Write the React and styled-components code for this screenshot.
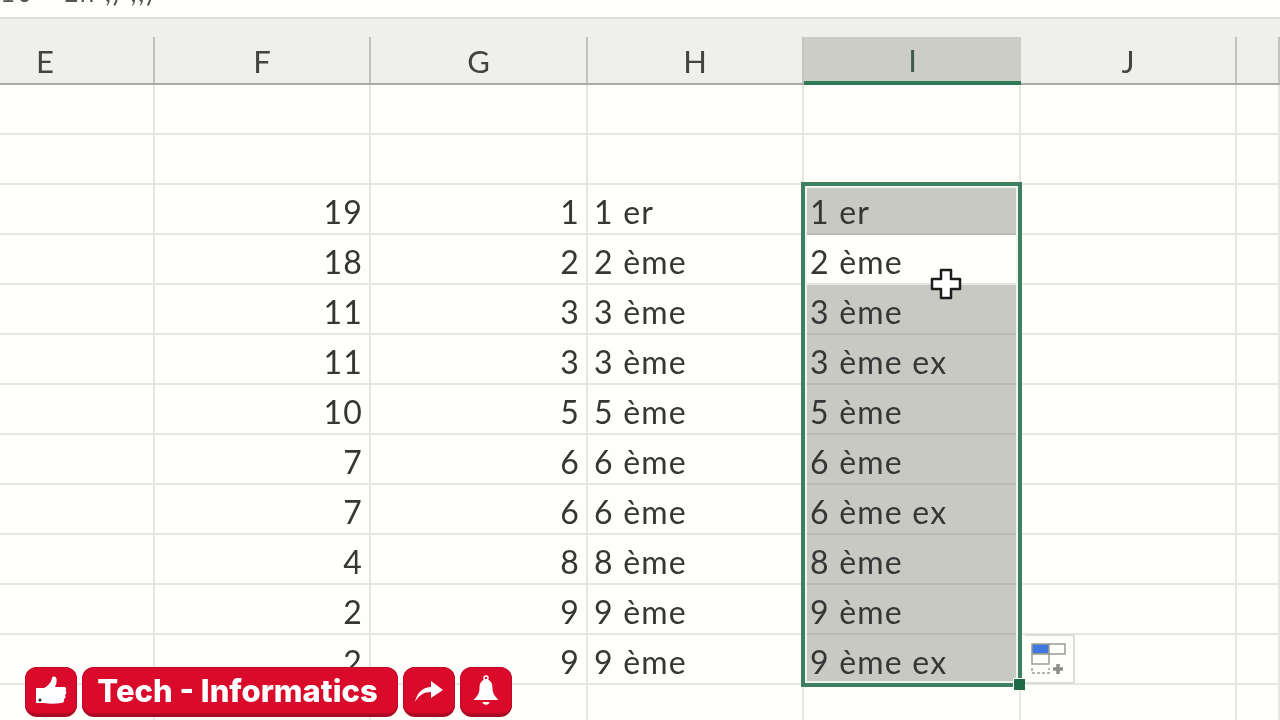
import React from 'react';
import styled, { createGlobalStyle } from 'styled-components';

const GlobalStyle = createGlobalStyle`
  html, body {
    margin: 0;
    padding: 0;
    background: #fefefa;
  }
  body {
    font-family: "Lato", "Liberation Sans", sans-serif;
  }
`;

const COLUMNS = '155px 216px 217px 216px 217px 216px 43px';

const Page = styled.div`
  position: relative;
  width: 1280px;
  height: 720px;
  overflow: hidden;
  background: #fefefa;
  color: #363636;
  filter: blur(0.35px);
`;

const FormulaBar = styled.div`
  height: 17px;
  overflow: hidden;
  border-bottom: 2px solid #dcdcd8;
  font-size: 26px;
  line-height: 30px;
  color: #55554f;
  white-space: nowrap;
`;

const FormulaText = styled.div`
  margin-top: -23px;
  letter-spacing: 2px;
`;

const HeaderRow = styled.div`
  display: grid;
  grid-template-columns: ${COLUMNS};
  height: 64px;
  align-items: end;
  background: #efefec;
  border-bottom: 2px solid #a9a9a5;
`;

const HeadCell = styled.div`
  box-sizing: border-box;
  height: ${p => (p.$active ? '48px' : '46px')};
  margin-bottom: ${p => (p.$active ? '-2px' : '0')};
  padding-top: 1px;
  padding-right: ${p => (p.$first ? '99px' : '0')};
  display: flex;
  align-items: center;
  justify-content: ${p => (p.$first ? 'flex-end' : 'center')};
  font-size: 31px;
  color: ${p => (p.$active ? '#3f5a4d' : '#44443f')};
  background: ${p => (p.$active ? '#cdcdc8' : 'transparent')};
  border-right: ${p => (p.$active ? '0' : '2px solid #c2c2be')};
  border-bottom: ${p => (p.$active ? '4px solid #2f7a55' : '0')};
`;

const Sheet = styled.div`
  position: relative;
`;

const Row = styled.div`
  display: grid;
  grid-template-columns: ${COLUMNS};
  height: 50px;
`;

const Cell = styled.div`
  box-sizing: border-box;
  display: flex;
  align-items: center;
  justify-content: ${p => (p.$right ? 'flex-end' : 'flex-start')};
  padding: 4px 6px 0;
  font-size: 32px;
  letter-spacing: 1.2px;
  white-space: nowrap;
  overflow: hidden;
  border-right: 2px solid #e6e6e2;
  border-bottom: 2px solid ${p => (p.$selected ? '#b9b9b4' : '#e6e6e2')};
  background: ${p => (p.$selected ? '#c9c9c4' : 'transparent')};
`;

const SelectionBox = styled.div`
  position: absolute;
  left: 801px;
  top: 97px;
  width: 221px;
  height: 505px;
  box-sizing: border-box;
  border: 4px solid #3f7f60;
  box-shadow: inset 0 0 0 2px #eef5ef;
  pointer-events: none;
`;

const FillHandle = styled.div`
  position: absolute;
  left: 1013px;
  top: 593px;
  width: 11px;
  height: 11px;
  background: #1f6b48;
  border: 1px solid #fefefa;
`;

const QuickAnalysis = styled.div`
  position: absolute;
  left: 1025px;
  top: 549px;
  width: 50px;
  height: 50px;
  box-sizing: border-box;
  border: 2px solid #dcdcd8;
  border-left: 0;
  display: flex;
  align-items: center;
  justify-content: center;
`;

const CursorIcon = styled.svg`
  position: absolute;
  left: 930px;
  top: 183px;
  width: 32px;
  height: 32px;
`;

const Banner = styled.div`
  position: absolute;
  left: 25px;
  top: 667px;
  display: flex;
  gap: 5px;
`;

const RedButton = styled.div`
  box-sizing: border-box;
  height: 50px;
  width: ${p => p.$w || '52px'};
  padding-right: ${p => p.$pr || '0'};
  display: flex;
  align-items: center;
  justify-content: center;
  border-radius: 12px;
  background: #da0a2b;
  border-bottom: 3px solid #a80a24;
  box-shadow: inset 0 0 0 1px #c2082a;
  color: #fff;
  font-family: "Inter", "Liberation Sans", sans-serif;
  font-weight: 800;
  font-size: 31px;
  white-space: nowrap;
`;

const headers = ['E', 'F', 'G', 'H', 'I', 'J', ''];

const rows = [
  ['', '', '', ''],
  ['', '', '', ''],
  ['19', '1', '1 er', '1 er'],
  ['18', '2', '2 ème', '2 ème'],
  ['11', '3', '3 ème', '3 ème'],
  ['11', '3', '3 ème', '3 ème ex'],
  ['10', '5', '5 ème', '5 ème'],
  ['7', '6', '6 ème', '6 ème'],
  ['7', '6', '6 ème', '6 ème ex'],
  ['4', '8', '8 ème', '8 ème'],
  ['2', '9', '9 ème', '9 ème'],
  ['2', '9', '9 ème', '9 ème ex'],
  ['', '', '', ''],
];

const ThumbIcon = () => (
  <svg width="32" height="30" viewBox="0 0 32 30">
    <path
      fill="#fff"
      d="M1 12 H9 C13 10 16.500 6 17 2 C17.500 0 21 0 21.500 3 C22 6 21 9 20 11 H29 C31 11 32 13 30.500 14.500 C32 16 31.500 18 30 19 C31 20.500 30.500 22.500 29 23 C29.500 25.500 28.500 27 26 27 C20 28 14 28 9 27 H1 Z"
    />
    <circle cx="5" cy="24" r="1.500" fill="#222" />
  </svg>
);

const ShareIcon = () => (
  <svg width="28" height="22" viewBox="0 0 28 22">
    <path
      fill="#fff"
      d="M0 22 C2 12 9 7 16 7 V1 L28 10 L16 18 V12 C9 12 4 15 0 22 Z"
    />
  </svg>
);

const BellIcon = () => (
  <svg width="26" height="31" viewBox="0 0 26 31">
    <circle cx="13" cy="3" r="2" fill="none" stroke="#fff" strokeWidth="1.500" />
    <path
      fill="#fff"
      d="M13 4.500 C18 4.500 19.500 9 19.500 13 C19.500 18 21.500 21 25.500 25 H0.500 C4.500 21 6.500 18 6.500 13 C6.500 9 8 4.500 13 4.500 Z"
    />
    <path fill="#fff" d="M9.500 27 H16.500 C16.500 30.500 9.500 30.500 9.500 27 Z" />
  </svg>
);

const QuickIcon = () => (
  <svg width="36" height="32" viewBox="0 0 36 32">
    <rect x="1" y="1" width="17" height="10" fill="#3f78e0" stroke="#9a9a96" strokeWidth="1.500" />
    <rect x="18" y="1" width="16" height="10" fill="#fefefa" stroke="#9a9a96" strokeWidth="1.500" />
    <rect x="1" y="11" width="17" height="10" fill="#fefefa" stroke="#9a9a96" strokeWidth="1.500" />
    <path d="M1 25 V30 H18 V25" fill="none" stroke="#9a9a96" strokeWidth="1.500" strokeDasharray="3 2" />
    <path d="M27 21 V31 M22 26 H32" stroke="#8d8d89" strokeWidth="3.500" />
  </svg>
);

const App = () => {
  return (
    <Page>
      <GlobalStyle />
      <FormulaBar>
        <FormulaText>10 - En ,) ,,)</FormulaText>
      </FormulaBar>
      <HeaderRow>
        {headers.map((h, i) => (
          <HeadCell key={i} $active={h === 'I'} $first={i === 0}>
            {h}
          </HeadCell>
        ))}
      </HeaderRow>
      <Sheet>
        {rows.map((r, i) => (
          <Row key={i}>
            <Cell />
            <Cell $right>{r[0]}</Cell>
            <Cell $right>{r[1]}</Cell>
            <Cell>{r[2]}</Cell>
            <Cell $selected={i >= 2 && i <= 11 && i !== 3}>{r[3]}</Cell>
            <Cell />
            <Cell />
          </Row>
        ))}
        <SelectionBox />
        <FillHandle />
        <QuickAnalysis>
          <QuickIcon />
        </QuickAnalysis>
        <CursorIcon viewBox="0 0 32 32">
          <path
            d="M11 2 H21 V11 H30 V21 H21 V30 H11 V21 H2 V11 H11 Z"
            fill="#fff"
            stroke="#1c1c1c"
            strokeWidth="2.500"
            strokeLinejoin="round"
          />
        </CursorIcon>
      </Sheet>
      <Banner>
        <RedButton>
          <ThumbIcon />
        </RedButton>
        <RedButton $w="316px" $pr="5px">Tech - Informatics</RedButton>
        <RedButton>
          <ShareIcon />
        </RedButton>
        <RedButton>
          <BellIcon />
        </RedButton>
      </Banner>
    </Page>
  );
};

export default App;
